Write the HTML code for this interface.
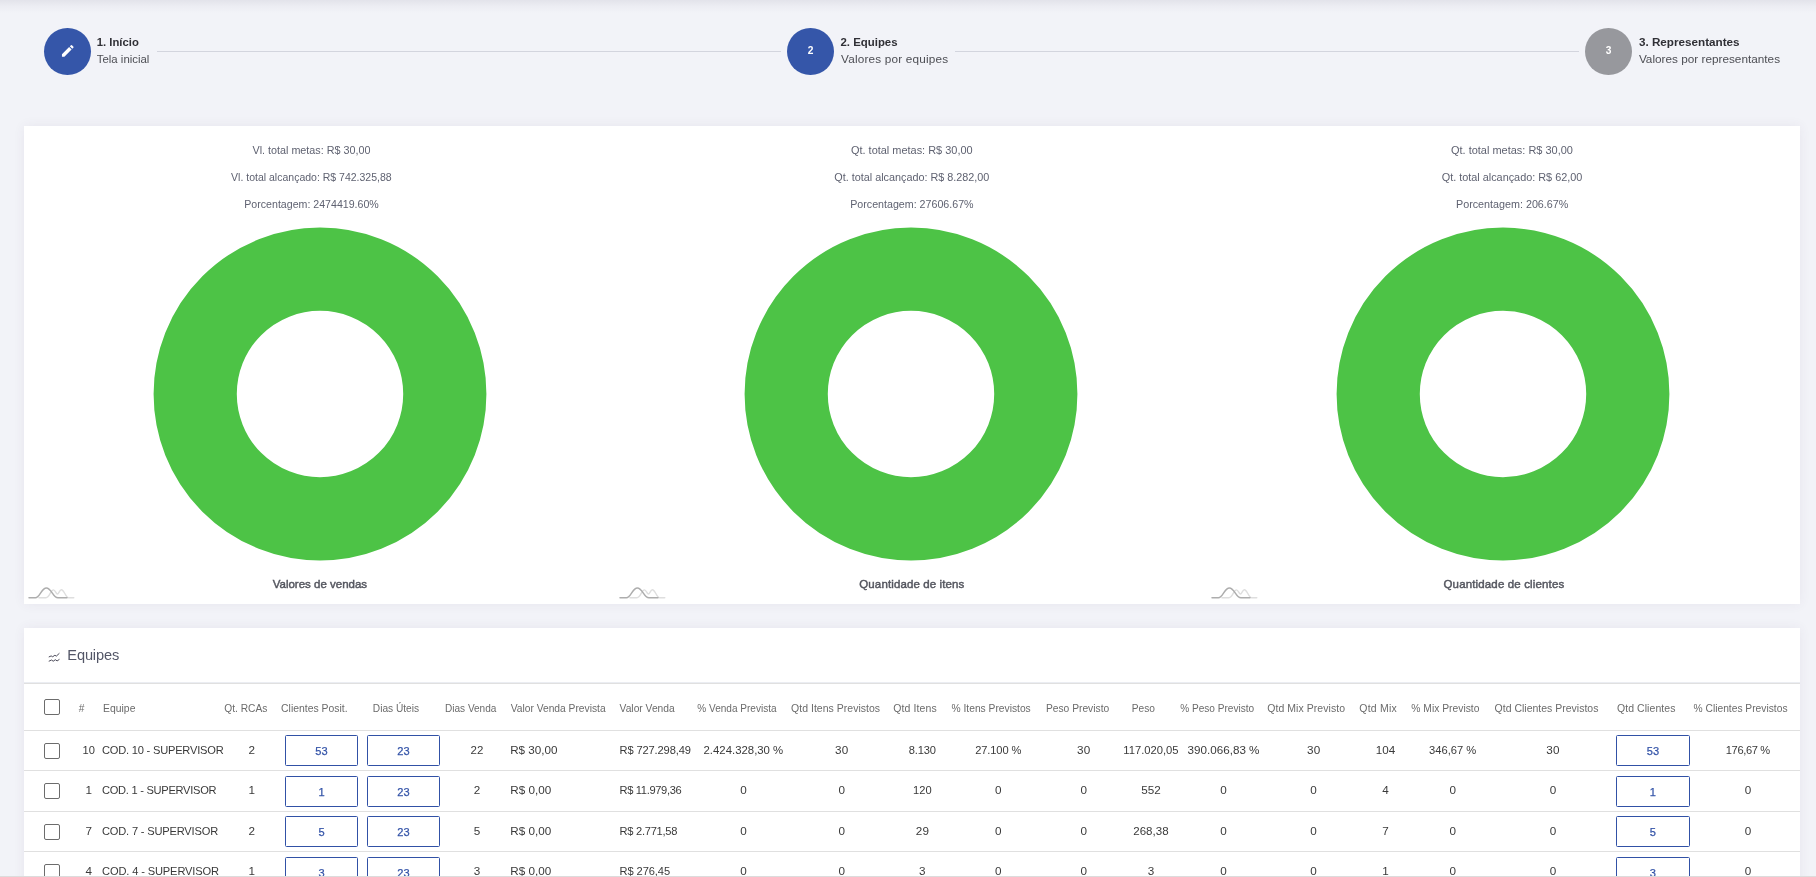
<!DOCTYPE html>
<html lang="pt-BR"><head><meta charset="utf-8"><title>Metas - Equipes</title>
<style>
*{box-sizing:border-box}
html,body{margin:0;padding:0}
body{width:1816px;height:877px;overflow:hidden;background:#f2f3f8;font-family:"Liberation Sans", Arial, sans-serif;position:relative;-webkit-font-smoothing:antialiased}
#app{position:absolute;left:0;top:0;width:1816px;height:877px;will-change:transform}
.topshadow{position:absolute;left:0;top:0;width:1816px;height:13px;background:linear-gradient(to bottom,rgba(60,60,90,.085),rgba(60,60,90,.03) 50%,rgba(60,60,90,0))}
.t{position:absolute;white-space:pre;display:block}
.md{-webkit-text-stroke:.45px #54565f}
.stepper{position:absolute;left:0;top:0;width:1816px;height:100px}
.circle{position:absolute;width:46.8px;height:46.8px;border-radius:50%;background:#3556a9;color:#fff;font-size:10.2px;font-weight:700;text-align:center;line-height:46.8px}
.circle.off{background:#97989d}
.circle svg{position:absolute;left:0;top:0}
.divider{position:absolute;height:1px;background:#d3d5de;top:51px;border:0;margin:0}
.card{position:absolute;background:#fff;box-shadow:0 0 11px 0 rgba(82,63,105,.07)}
.card-head{position:absolute;left:0;top:0;right:0;height:55px;border-bottom:1px solid #ebedf2;box-shadow:0 1px 0 #e0e0e0}
table{position:absolute;left:0;top:56px;border-collapse:collapse;table-layout:fixed;width:1778px;font-size:11.7px;color:#3a3a3a}
th,td{padding:0;margin:0;border-bottom:1px solid #e0e0e0;white-space:nowrap;overflow:visible;vertical-align:middle}
th{height:46px;font-size:10.2px;font-weight:400;color:#6b6b6b;text-align:left}
th span{display:inline-block;position:relative;top:1.25px}
td{height:40px;text-align:center}
tr.r2 td{height:41px}
td span{display:inline-block;position:relative;top:-1px}
td.l{text-align:left}
.cb{display:block;width:16px;height:16px;border:1px solid #6c6c6c;border-radius:2px;background:#fff;margin-left:20px}
.inp{display:block;margin:0 auto;width:73px;height:31px;border:1px solid #3151a6;border-radius:1.5px;color:#3454a8;-webkit-text-stroke:.25px #3454a8;font-size:11.05px;line-height:30px;text-align:center;background:#fff}
.bottomline{position:absolute;left:0;top:876px;width:1816px;height:1px;background:#dcdcdc}
</style></head><body>
<div class="topshadow"></div>
<div id="app">

<div class="stepper">
<div class="step done">
<div class="circle" style="left:43.8px;top:27.9px"><svg style="left:16.4px;top:15.5px" width="15.6" height="15.6" viewBox="0 0 24 24" fill="#fff"><path d="M3 17.25V21h3.75L17.81 9.94l-3.75-3.75L3 17.25zM20.71 7.04a1 1 0 0 0 0-1.41l-2.34-2.34a1 1 0 0 0-1.41 0l-1.83 1.83 3.75 3.75 1.83-1.83z"/></svg></div>
<span class="t" style="left:96.80px;top:34.00px;font-size:11.29px;font-weight:700;color:#303036;line-height:16px">1. Início</span>
<span class="t" style="left:96.80px;top:51.00px;font-size:11.4px;font-weight:400;color:#4d4e54;line-height:16px">Tela inicial</span>
</div>
<hr class="divider" style="left:157px;width:623.5px">
<div class="step active">
<div class="circle" style="left:787.1px;top:27.9px">2</div>
<span class="t" style="left:840.50px;top:34.00px;font-size:11.42px;font-weight:700;color:#303036;line-height:16px">2. Equipes</span>
<span class="t" style="left:841.00px;top:50.50px;font-size:11.77px;font-weight:400;color:#4d4e54;letter-spacing:0.183px;line-height:16px">Valores por equipes</span>
</div>
<hr class="divider" style="left:955.3px;width:623.3px">
<div class="step">
<div class="circle off" style="left:1585.1px;top:27.9px">3</div>
<span class="t" style="left:1638.90px;top:33.50px;font-size:11.69px;font-weight:700;color:#303036;line-height:16px">3. Representantes</span>
<span class="t" style="left:1638.90px;top:50.50px;font-size:11.77px;font-weight:400;color:#4d4e54;letter-spacing:0.004px;line-height:16px">Valores por representantes</span>
</div>
</div>
<div class="card" style="left:24px;top:126px;width:1776px;height:478px"></div>
<div class="charts">
<section class="chart">
<svg class="t" style="left:149.70px;top:224.40px" width="340" height="340" viewBox="-170 -170 340 340"><circle cx="0" cy="0" r="124.8" fill="none" stroke="#4dc346" stroke-width="83.2"/></svg>
<span class="t" style="left:252.50px;top:142.00px;font-size:10.78px;font-weight:400;color:#5f6271;line-height:16px">Vl. total metas: R$ 30,00</span>
<span class="t" style="left:231.10px;top:169.00px;font-size:10.51px;font-weight:400;color:#5f6271;line-height:16px">Vl. total alcançado: R$ 742.325,88</span>
<span class="t" style="left:244.30px;top:196.00px;font-size:10.61px;font-weight:400;color:#5f6271;line-height:16px">Porcentagem: 2474419.60%</span>
<span class="t md" style="left:272.70px;top:576.00px;font-size:11.5px;font-weight:400;color:#54565f;line-height:16px">Valores de vendas</span>
<svg class="t" style="left:28.10px;top:585px" width="48" height="15" viewBox="0 0 48 15" fill="none" stroke-linecap="round"><path d="M10.9 12.7H18C21.6 12.7 22.6 4.9 25.4 4.9C27.4 4.9 27.9 9 29.4 9C30.9 9 31.4 4.7 33.4 4.7C36 4.7 37.9 12.7 40.4 12.7H45.8" stroke="#dedede" stroke-width="1.4"/><path d="M1 12.7H7.4C11.8 12.7 13.4 2.9 18.4 2.9C23.4 2.9 24.9 12.7 29.9 12.7H39" stroke="#adadad" stroke-width="1.5"/></svg>
</section>
<section class="chart">
<svg class="t" style="left:740.80px;top:224.40px" width="340" height="340" viewBox="-170 -170 340 340"><circle cx="0" cy="0" r="124.8" fill="none" stroke="#4dc346" stroke-width="83.2"/></svg>
<span class="t" style="left:851.00px;top:142.00px;font-size:10.95px;font-weight:400;color:#5f6271;line-height:16px">Qt. total metas: R$ 30,00</span>
<span class="t" style="left:834.30px;top:169.00px;font-size:10.82px;font-weight:400;color:#5f6271;line-height:16px">Qt. total alcançado: R$ 8.282,00</span>
<span class="t" style="left:850.20px;top:196.00px;font-size:10.68px;font-weight:400;color:#5f6271;line-height:16px">Porcentagem: 27606.67%</span>
<span class="t md" style="left:859.30px;top:576.00px;font-size:11.5px;font-weight:400;color:#54565f;letter-spacing:0.117px;line-height:16px">Quantidade de itens</span>
<svg class="t" style="left:619.30px;top:585px" width="48" height="15" viewBox="0 0 48 15" fill="none" stroke-linecap="round"><path d="M10.9 12.7H18C21.6 12.7 22.6 4.9 25.4 4.9C27.4 4.9 27.9 9 29.4 9C30.9 9 31.4 4.7 33.4 4.7C36 4.7 37.9 12.7 40.4 12.7H45.8" stroke="#dedede" stroke-width="1.4"/><path d="M1 12.7H7.4C11.8 12.7 13.4 2.9 18.4 2.9C23.4 2.9 24.9 12.7 29.9 12.7H39" stroke="#adadad" stroke-width="1.5"/></svg>
</section>
<section class="chart">
<svg class="t" style="left:1332.80px;top:224.40px" width="340" height="340" viewBox="-170 -170 340 340"><circle cx="0" cy="0" r="124.8" fill="none" stroke="#4dc346" stroke-width="83.2"/></svg>
<span class="t" style="left:1451.00px;top:142.00px;font-size:10.97px;font-weight:400;color:#5f6271;line-height:16px">Qt. total metas: R$ 30,00</span>
<span class="t" style="left:1441.70px;top:169.00px;font-size:10.86px;font-weight:400;color:#5f6271;line-height:16px">Qt. total alcançado: R$ 62,00</span>
<span class="t" style="left:1456.00px;top:196.00px;font-size:10.76px;font-weight:400;color:#5f6271;line-height:16px">Porcentagem: 206.67%</span>
<span class="t md" style="left:1443.50px;top:576.00px;font-size:11.5px;font-weight:400;color:#54565f;letter-spacing:0.147px;line-height:16px">Quantidade de clientes</span>
<svg class="t" style="left:1210.50px;top:585px" width="48" height="15" viewBox="0 0 48 15" fill="none" stroke-linecap="round"><path d="M10.9 12.7H18C21.6 12.7 22.6 4.9 25.4 4.9C27.4 4.9 27.9 9 29.4 9C30.9 9 31.4 4.7 33.4 4.7C36 4.7 37.9 12.7 40.4 12.7H45.8" stroke="#dedede" stroke-width="1.4"/><path d="M1 12.7H7.4C11.8 12.7 13.4 2.9 18.4 2.9C23.4 2.9 24.9 12.7 29.9 12.7H39" stroke="#adadad" stroke-width="1.5"/></svg>
</section>
</div>
<div class="card" style="left:24px;top:628px;width:1776px;height:260px;overflow:hidden">
<div class="card-head"></div>
<svg class="t" style="left:24.4px;top:23.6px" width="13" height="11.2" viewBox="0 0 14 12" fill="none" stroke="#3f3e4e" stroke-width="1" stroke-linejoin="round" stroke-linecap="round"><path d="M1.2 5.2l2.2-1 1.6.9 2.4-1.6 1.6.9L12 1.6"/><path d="M1.2 9.8l2.6-1.2 1.8 1.3 2.3-1.6 1.9 1.3 2.2-1.5"/></svg>
<span class="t" style="left:43.30px;top:17.00px;font-size:14.6px;color:#535667;letter-spacing:-0.136px;line-height:20px">Equipes</span>
<table><colgroup>
<col style="width:54.00px">
<col style="width:21.50px">
<col style="width:123.50px">
<col style="width:57.50px">
<col style="width:82.00px">
<col style="width:82.00px">
<col style="width:65.00px">
<col style="width:109.00px">
<col style="width:78.20px">
<col style="width:93.40px">
<col style="width:103.20px">
<col style="width:58.20px">
<col style="width:93.60px">
<col style="width:77.40px">
<col style="width:57.00px">
<col style="width:88.20px">
<col style="width:91.90px">
<col style="width:51.90px">
<col style="width:82.50px">
<col style="width:118.00px">
<col style="width:82.00px">
<col style="width:108.00px">
</colgroup><thead><tr>
<th><span class="cb" style="top:0"></span></th>
<th><span style="margin-left:0.80px;font-size:10.2px;letter-spacing:0.0px">#</span></th>
<th><span style="margin-left:3.60px;font-size:10.38px;letter-spacing:0.0px">Equipe</span></th>
<th><span style="margin-left:1.20px;font-size:10.22px;letter-spacing:0.0px">Qt. RCAs</span></th>
<th><span style="margin-left:0.60px;font-size:10.42px;letter-spacing:0.0px">Clientes Posit.</span></th>
<th><span style="margin-left:10.30px;font-size:10.17px;letter-spacing:0.0px">Dias Úteis</span></th>
<th><span style="margin-left:0.50px;font-size:10.06px;letter-spacing:0.0px">Dias Venda</span></th>
<th><span style="margin-left:1.20px;font-size:10.26px;letter-spacing:0.0px">Valor Venda Prevista</span></th>
<th><span style="margin-left:1.10px;font-size:10.26px;letter-spacing:0.0px">Valor Venda</span></th>
<th><span style="margin-left:0.60px;font-size:10.06px;letter-spacing:0.0px">% Venda Prevista</span></th>
<th><span style="margin-left:1.00px;font-size:10.49px;letter-spacing:0.023px">Qtd Itens Previstos</span></th>
<th><span style="margin-left:-0.10px;font-size:10.49px;letter-spacing:0.133px">Qtd Itens</span></th>
<th><span style="margin-left:0.10px;font-size:10.25px;letter-spacing:0.0px">% Itens Previstos</span></th>
<th><span style="margin-left:0.90px;font-size:10.26px;letter-spacing:0.0px">Peso Previsto</span></th>
<th><span style="margin-left:9.40px;font-size:10.18px;letter-spacing:0.0px">Peso</span></th>
<th><span style="margin-left:0.70px;font-size:10.11px;letter-spacing:0.0px">% Peso Previsto</span></th>
<th><span style="margin-left:-0.40px;font-size:10.49px;letter-spacing:0.061px">Qtd Mix Previsto</span></th>
<th><span style="margin-left:-0.20px;font-size:10.49px;letter-spacing:0.201px">Qtd Mix</span></th>
<th><span style="margin-left:-0.10px;font-size:10.31px;letter-spacing:0.0px">% Mix Previsto</span></th>
<th><span style="margin-left:0.70px;font-size:10.49px;letter-spacing:0.004px">Qtd Clientes Previstos</span></th>
<th><span style="margin-left:5.00px;font-size:10.49px;letter-spacing:0.081px">Qtd Clientes</span></th>
<th><span style="margin-left:-0.40px;font-size:10.25px;letter-spacing:0.0px">% Clientes Previstos</span></th>
</tr></thead><tbody>
<tr class="r1"><td><span class="cb" style="top:1px"></span></td>
<td><span style="font-size:11.11px;letter-spacing:-0.032px;margin-left:-0.032px">10</span></td>
<td class="l"><span style="margin-left:2.50px;font-size:11.11px;letter-spacing:-0.213px">COD. 10 - SUPERVISOR</span></td>
<td><span style="letter-spacing:0.0px;margin-left:0px">2</span></td>
<td><span class="inp" style="top:0px">53</span></td>
<td><span class="inp" style="top:0px">23</span></td>
<td><span style="font-size:11.51px;letter-spacing:0.0px;margin-left:0px">22</span></td>
<td class="l"><span style="margin-left:0.70px;font-size:11.67px;letter-spacing:0.0px">R$ 30,00</span></td>
<td class="l"><span style="margin-left:1.10px;font-size:11.11px;letter-spacing:-0.135px">R$ 727.298,49</span></td>
<td><span style="font-size:11.39px;letter-spacing:0.0px;margin-left:0px">2.424.328,30 %</span></td>
<td><span style="letter-spacing:0.242px;margin-left:0.242px">30</span></td>
<td><span style="font-size:11.11px;letter-spacing:-0.138px;margin-left:-0.138px">8.130</span></td>
<td><span style="font-size:11.11px;letter-spacing:-0.115px;margin-left:-0.115px">27.100 %</span></td>
<td><span style="letter-spacing:0.242px;margin-left:0.242px">30</span></td>
<td><span style="font-size:11.22px;letter-spacing:0.0px;margin-left:0px">117.020,05</span></td>
<td><span style="font-size:11.66px;letter-spacing:0.0px;margin-left:0px">390.066,83 %</span></td>
<td><span style="letter-spacing:0.242px;margin-left:0.242px">30</span></td>
<td><span style="font-size:11.63px;letter-spacing:0.0px;margin-left:0px">104</span></td>
<td><span style="font-size:11.2px;letter-spacing:0.0px;margin-left:0px">346,67 %</span></td>
<td><span style="letter-spacing:0.242px;margin-left:0.242px">30</span></td>
<td><span class="inp" style="top:0px;width:74px">53</span></td>
<td><span style="font-size:11.11px;letter-spacing:-0.365px;margin-left:-0.365px">176,67 %</span></td>
</tr>
<tr class="r2"><td><span class="cb" style="top:0px"></span></td>
<td><span style="letter-spacing:0.0px;margin-left:0px">1</span></td>
<td class="l"><span style="margin-left:2.50px;font-size:11.11px;letter-spacing:-0.279px">COD. 1 - SUPERVISOR</span></td>
<td><span style="letter-spacing:0.0px;margin-left:0px">1</span></td>
<td><span class="inp" style="top:1px">1</span></td>
<td><span class="inp" style="top:1px">23</span></td>
<td><span style="letter-spacing:0.0px;margin-left:0px">2</span></td>
<td class="l"><span style="margin-left:0.70px;letter-spacing:0.023px">R$ 0,00</span></td>
<td class="l"><span style="margin-left:1.10px;font-size:11.11px;letter-spacing:-0.347px">R$ 11.979,36</span></td>
<td><span style="letter-spacing:0.0px;margin-left:0px">0</span></td>
<td><span style="letter-spacing:0.0px;margin-left:0px">0</span></td>
<td><span style="font-size:11.11px;letter-spacing:-0.013px;margin-left:-0.013px">120</span></td>
<td><span style="letter-spacing:0.0px;margin-left:0px">0</span></td>
<td><span style="letter-spacing:0.0px;margin-left:0px">0</span></td>
<td><span style="font-size:11.69px;letter-spacing:0.0px;margin-left:0px">552</span></td>
<td><span style="letter-spacing:0.0px;margin-left:0px">0</span></td>
<td><span style="letter-spacing:0.0px;margin-left:0px">0</span></td>
<td><span style="letter-spacing:0.0px;margin-left:0px">4</span></td>
<td><span style="letter-spacing:0.0px;margin-left:0px">0</span></td>
<td><span style="letter-spacing:0.0px;margin-left:0px">0</span></td>
<td><span class="inp" style="top:1px;width:74px">1</span></td>
<td><span style="letter-spacing:0.0px;margin-left:0px">0</span></td>
</tr>
<tr class="r3"><td><span class="cb" style="top:1px"></span></td>
<td><span style="letter-spacing:0.0px;margin-left:0px">7</span></td>
<td class="l"><span style="margin-left:2.50px;font-size:11.11px;letter-spacing:-0.189px">COD. 7 - SUPERVISOR</span></td>
<td><span style="letter-spacing:0.0px;margin-left:0px">2</span></td>
<td><span class="inp" style="top:0px">5</span></td>
<td><span class="inp" style="top:0px">23</span></td>
<td><span style="letter-spacing:0.0px;margin-left:0px">5</span></td>
<td class="l"><span style="margin-left:0.70px;letter-spacing:0.023px">R$ 0,00</span></td>
<td class="l"><span style="margin-left:1.10px;font-size:11.11px;letter-spacing:-0.282px">R$ 2.771,58</span></td>
<td><span style="letter-spacing:0.0px;margin-left:0px">0</span></td>
<td><span style="letter-spacing:0.0px;margin-left:0px">0</span></td>
<td><span style="letter-spacing:0.142px;margin-left:0.142px">29</span></td>
<td><span style="letter-spacing:0.0px;margin-left:0px">0</span></td>
<td><span style="letter-spacing:0.0px;margin-left:0px">0</span></td>
<td><span style="font-size:11.52px;letter-spacing:0.0px;margin-left:0px">268,38</span></td>
<td><span style="letter-spacing:0.0px;margin-left:0px">0</span></td>
<td><span style="letter-spacing:0.0px;margin-left:0px">0</span></td>
<td><span style="letter-spacing:0.0px;margin-left:0px">7</span></td>
<td><span style="letter-spacing:0.0px;margin-left:0px">0</span></td>
<td><span style="letter-spacing:0.0px;margin-left:0px">0</span></td>
<td><span class="inp" style="top:0px;width:74px">5</span></td>
<td><span style="letter-spacing:0.0px;margin-left:0px">0</span></td>
</tr>
<tr class="r4"><td><span class="cb" style="top:1px"></span></td>
<td><span style="letter-spacing:0.0px;margin-left:0px">4</span></td>
<td class="l"><span style="margin-left:2.50px;font-size:11.11px;letter-spacing:-0.136px">COD. 4 - SUPERVISOR</span></td>
<td><span style="letter-spacing:0.0px;margin-left:0px">1</span></td>
<td><span class="inp" style="top:1px">3</span></td>
<td><span class="inp" style="top:1px">23</span></td>
<td><span style="letter-spacing:0.0px;margin-left:0px">3</span></td>
<td class="l"><span style="margin-left:0.70px;letter-spacing:0.023px">R$ 0,00</span></td>
<td class="l"><span style="margin-left:1.10px;font-size:11.11px;letter-spacing:-0.093px">R$ 276,45</span></td>
<td><span style="letter-spacing:0.0px;margin-left:0px">0</span></td>
<td><span style="letter-spacing:0.0px;margin-left:0px">0</span></td>
<td><span style="letter-spacing:0.0px;margin-left:0px">3</span></td>
<td><span style="letter-spacing:0.0px;margin-left:0px">0</span></td>
<td><span style="letter-spacing:0.0px;margin-left:0px">0</span></td>
<td><span style="letter-spacing:0.0px;margin-left:0px">3</span></td>
<td><span style="letter-spacing:0.0px;margin-left:0px">0</span></td>
<td><span style="letter-spacing:0.0px;margin-left:0px">0</span></td>
<td><span style="letter-spacing:0.0px;margin-left:0px">1</span></td>
<td><span style="letter-spacing:0.0px;margin-left:0px">0</span></td>
<td><span style="letter-spacing:0.0px;margin-left:0px">0</span></td>
<td><span class="inp" style="top:1px;width:74px">3</span></td>
<td><span style="letter-spacing:0.0px;margin-left:0px">0</span></td>
</tr>
</tbody></table></div>
</div>
<div class="bottomline"></div>
</body></html>
